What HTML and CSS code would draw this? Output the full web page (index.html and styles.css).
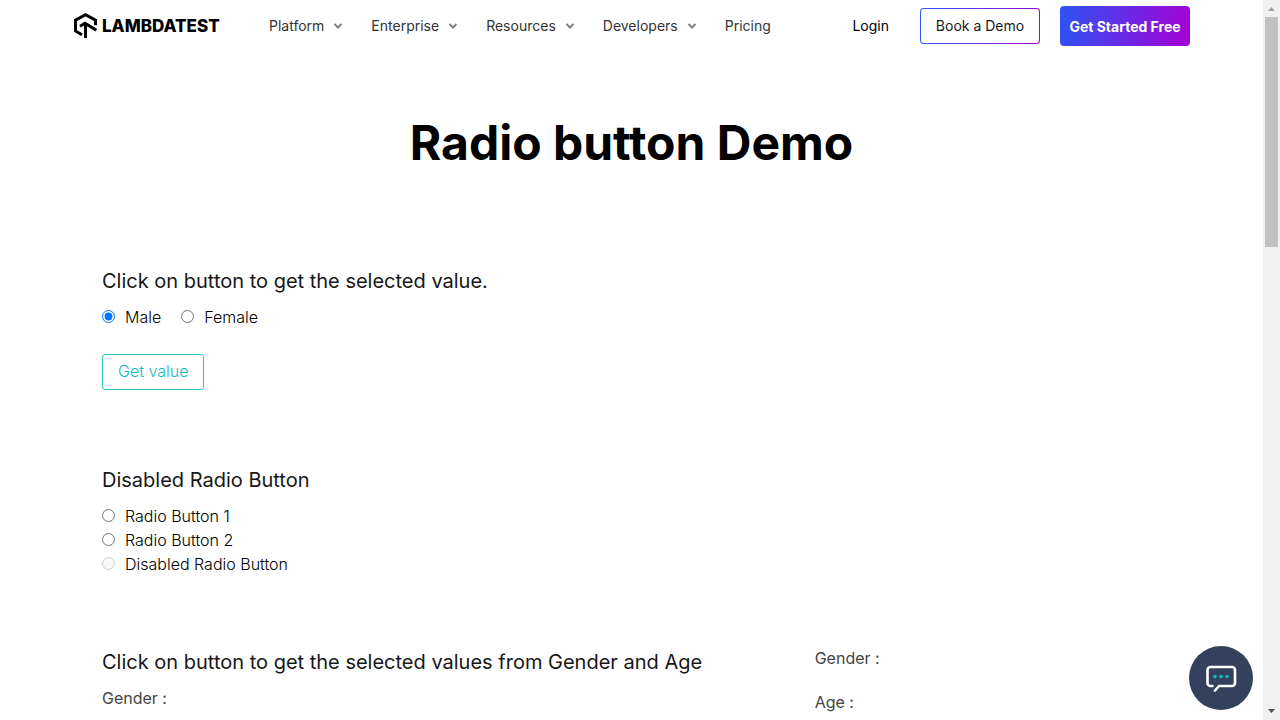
FILE: index.html
```html
<!DOCTYPE html>
<html lang="en">
<head>
<meta charset="utf-8">
<title>Radio button Demo</title>
<link rel="stylesheet" href="styles.css">
</head>
<body>
<div class="window">
  <div class="page">
    <header class="header">
      <a class="logo" href="#" aria-label="LambdaTest home">
        <svg class="logo-mark" viewBox="0 0 24 26" aria-hidden="true">
          <path d="M9 21.700 2.500 18V7.200L12.500 1.800l10 5.400v5" fill="none" stroke="#000" stroke-width="3"/>
          <path d="M7 13.300 12 10.300l11.300 6.900M12.500 10.800V25" fill="none" stroke="#000" stroke-width="3"/>
        </svg>
        <span class="logo-text">LAMBDATEST</span>
      </a>
      <nav class="nav" aria-label="Main">
        <a class="nav-link" href="#">Platform<svg class="chevron" viewBox="0 0 10 6" aria-hidden="true"><path d="M1.500 1 5 4.500 8.500 1"/></svg></a>
        <a class="nav-link" href="#">Enterprise<svg class="chevron" viewBox="0 0 10 6" aria-hidden="true"><path d="M1.500 1 5 4.500 8.500 1"/></svg></a>
        <a class="nav-link" href="#">Resources<svg class="chevron" viewBox="0 0 10 6" aria-hidden="true"><path d="M1.500 1 5 4.500 8.500 1"/></svg></a>
        <a class="nav-link" href="#">Developers<svg class="chevron" viewBox="0 0 10 6" aria-hidden="true"><path d="M1.500 1 5 4.500 8.500 1"/></svg></a>
        <a class="nav-link" href="#">Pricing</a>
      </nav>
      <div class="actions">
        <a class="login" href="#">Login</a>
        <button class="btn btn-demo" type="button">Book a Demo</button>
        <button class="btn btn-start" type="button">Get Started Free</button>
      </div>
    </header>
    <main class="main">
      <h1 class="title">Radio button Demo</h1>
      <section class="section section-value">
        <h2 class="heading">Click on button to get the selected value.</h2>
        <div class="inline-options">
          <label class="option"><input class="radio" type="radio" name="sex" checked>Male</label>
          <label class="option"><input class="radio" type="radio" name="sex">Female</label>
        </div>
        <button class="btn-value" type="button">Get value</button>
      </section>
      <section class="section section-disabled">
        <h2 class="heading">Disabled Radio Button</h2>
        <div class="options">
          <label class="option"><input class="radio" type="radio" name="choice">Radio Button 1</label>
          <label class="option"><input class="radio" type="radio" name="choice">Radio Button 2</label>
          <label class="option"><input class="radio" type="radio" name="choice" disabled>Disabled Radio Button</label>
        </div>
      </section>
      <section class="section split">
        <div class="query">
          <h2 class="heading">Click on button to get the selected values from Gender and Age</h2>
          <p class="field">Gender :</p>
        </div>
        <div class="results">
          <p class="field">Gender :</p>
          <p class="field">Age :</p>
        </div>
      </section>
    </main>
    <button class="chat" type="button" aria-label="Open chat">
      <svg class="chat-icon" viewBox="0 0 32 28" aria-hidden="true">
        <path d="M7.500 22H5.500a3 3 0 0 1-3-3V6a3 3 0 0 1 3-3h21.500a3 3 0 0 1 3 3v13a3 3 0 0 1-3 3H14L10 26.500" fill="none" stroke="#fff" stroke-width="2.600" stroke-linecap="round" stroke-linejoin="round"/>
        <g fill="#0ebac5"><circle cx="10" cy="12.500" r="1.800"/><circle cx="16" cy="12.500" r="1.800"/><circle cx="22" cy="12.500" r="1.800"/></g>
      </svg>
    </button>
  </div>
  <div class="scrollbar" aria-hidden="true">
    <svg class="arrow" viewBox="0 0 17 17"><path d="M5 11h7L8.500 7z" fill="#a3a3a3"/></svg>
    <div class="track"><div class="thumb"></div></div>
    <svg class="arrow" viewBox="0 0 17 17"><path d="M5 6h7l-3.500 4z" fill="#505050"/></svg>
  </div>
</div>
</body>
</html>
```
FILE: styles.css
```css
* { box-sizing: border-box; }
body {
  margin: 0;
  font-family: Inter, "Liberation Sans", sans-serif;
  font-size: 16px;
  line-height: 24px;
  color: #000;
  background: #fff;
}
h1, h2, p { margin: 0; }
a { color: inherit; text-decoration: none; }
button { font-family: inherit; cursor: pointer; }
.window { display: grid; grid-template-columns: 1fr 17px; height: 100vh; }
.page { position: relative; overflow: hidden; min-width: 0; }

.header {
  display: flex;
  align-items: center;
  height: 52px;
  padding: 0 73px;
  font-size: 14px;
  color: #333;
}
.logo { display: flex; align-items: center; gap: 5px; width: 196px; color: #000; }
.logo-mark { width: 24px; height: 26px; }
.logo-text { font-family: Inter, sans-serif; font-size: 17px; font-weight: 800; }
.nav { display: flex; gap: 28px; }
.nav-link { display: flex; align-items: center; gap: 9px; }
.chevron { width: 10px; height: 6px; fill: none; stroke: #808080; stroke-width: 2; }
.actions { display: flex; align-items: center; margin-left: auto; color: #000; }
.login { margin-right: 31px; }
.btn { border-radius: 4px; font-size: 14px; }
.btn-demo {
  width: 120px;
  height: 36px;
  margin-right: 20px;
  padding: 0 0 2px;
  color: #1a1a1a;
  border: 1px solid transparent;
  background: linear-gradient(#fff, #fff) padding-box, linear-gradient(90deg, #2c5af6, #a400d4) border-box;
}
.btn-start {
  width: 130px;
  height: 40px;
  padding: 0;
  border: 0;
  color: #fff;
  font-weight: 700;
  background: linear-gradient(100deg, #2c54f6, #a700d3);
}

.title { padding: 61px 0 93px; font-size: 48px; line-height: 60px; font-weight: 700; text-align: center; }
.section { padding: 0 102px; }
.heading { font-size: 20px; line-height: 30px; font-weight: 400; color: #171717; }
.option { display: flex; align-items: center; font-weight: 300; }
.radio { width: 13px; height: 13px; margin: 0 10px 2px 0; }
.inline-options { display: flex; gap: 20px; padding-top: 9px; }
.btn-value {
  height: 36px;
  margin-top: 25px;
  padding: 0 15px 2px;
  border: 1px solid #2cc3cd;
  border-radius: 3px;
  background: #fff;
  color: #0ebac5;
  font-size: 16px;
  font-weight: 300;
}
.section-disabled { padding-top: 75px; }
.options { padding-top: 9px; }
.split { display: grid; grid-template-columns: 2fr 1fr; column-gap: 20px; padding-top: 70px; }
.field { font-size: 16px; line-height: 24px; color: #444; }
.query { padding-top: 1px; }
.query .field { padding-top: 9px; }
.results { display: flex; flex-direction: column; gap: 20px; }

.chat {
  position: absolute;
  right: 10px;
  bottom: 10px;
  display: grid;
  place-items: center;
  width: 64px;
  height: 64px;
  padding: 0;
  border: 0;
  border-radius: 50%;
  background: #33415c;
}
.chat-icon { width: 32px; height: 28px; }

.scrollbar { display: flex; flex-direction: column; background: #f1f1f1; }
.arrow { width: 17px; height: 17px; }
.track { flex: 1; padding: 0 2px; }
.thumb { height: 230px; background: #c1c1c1; }
```
